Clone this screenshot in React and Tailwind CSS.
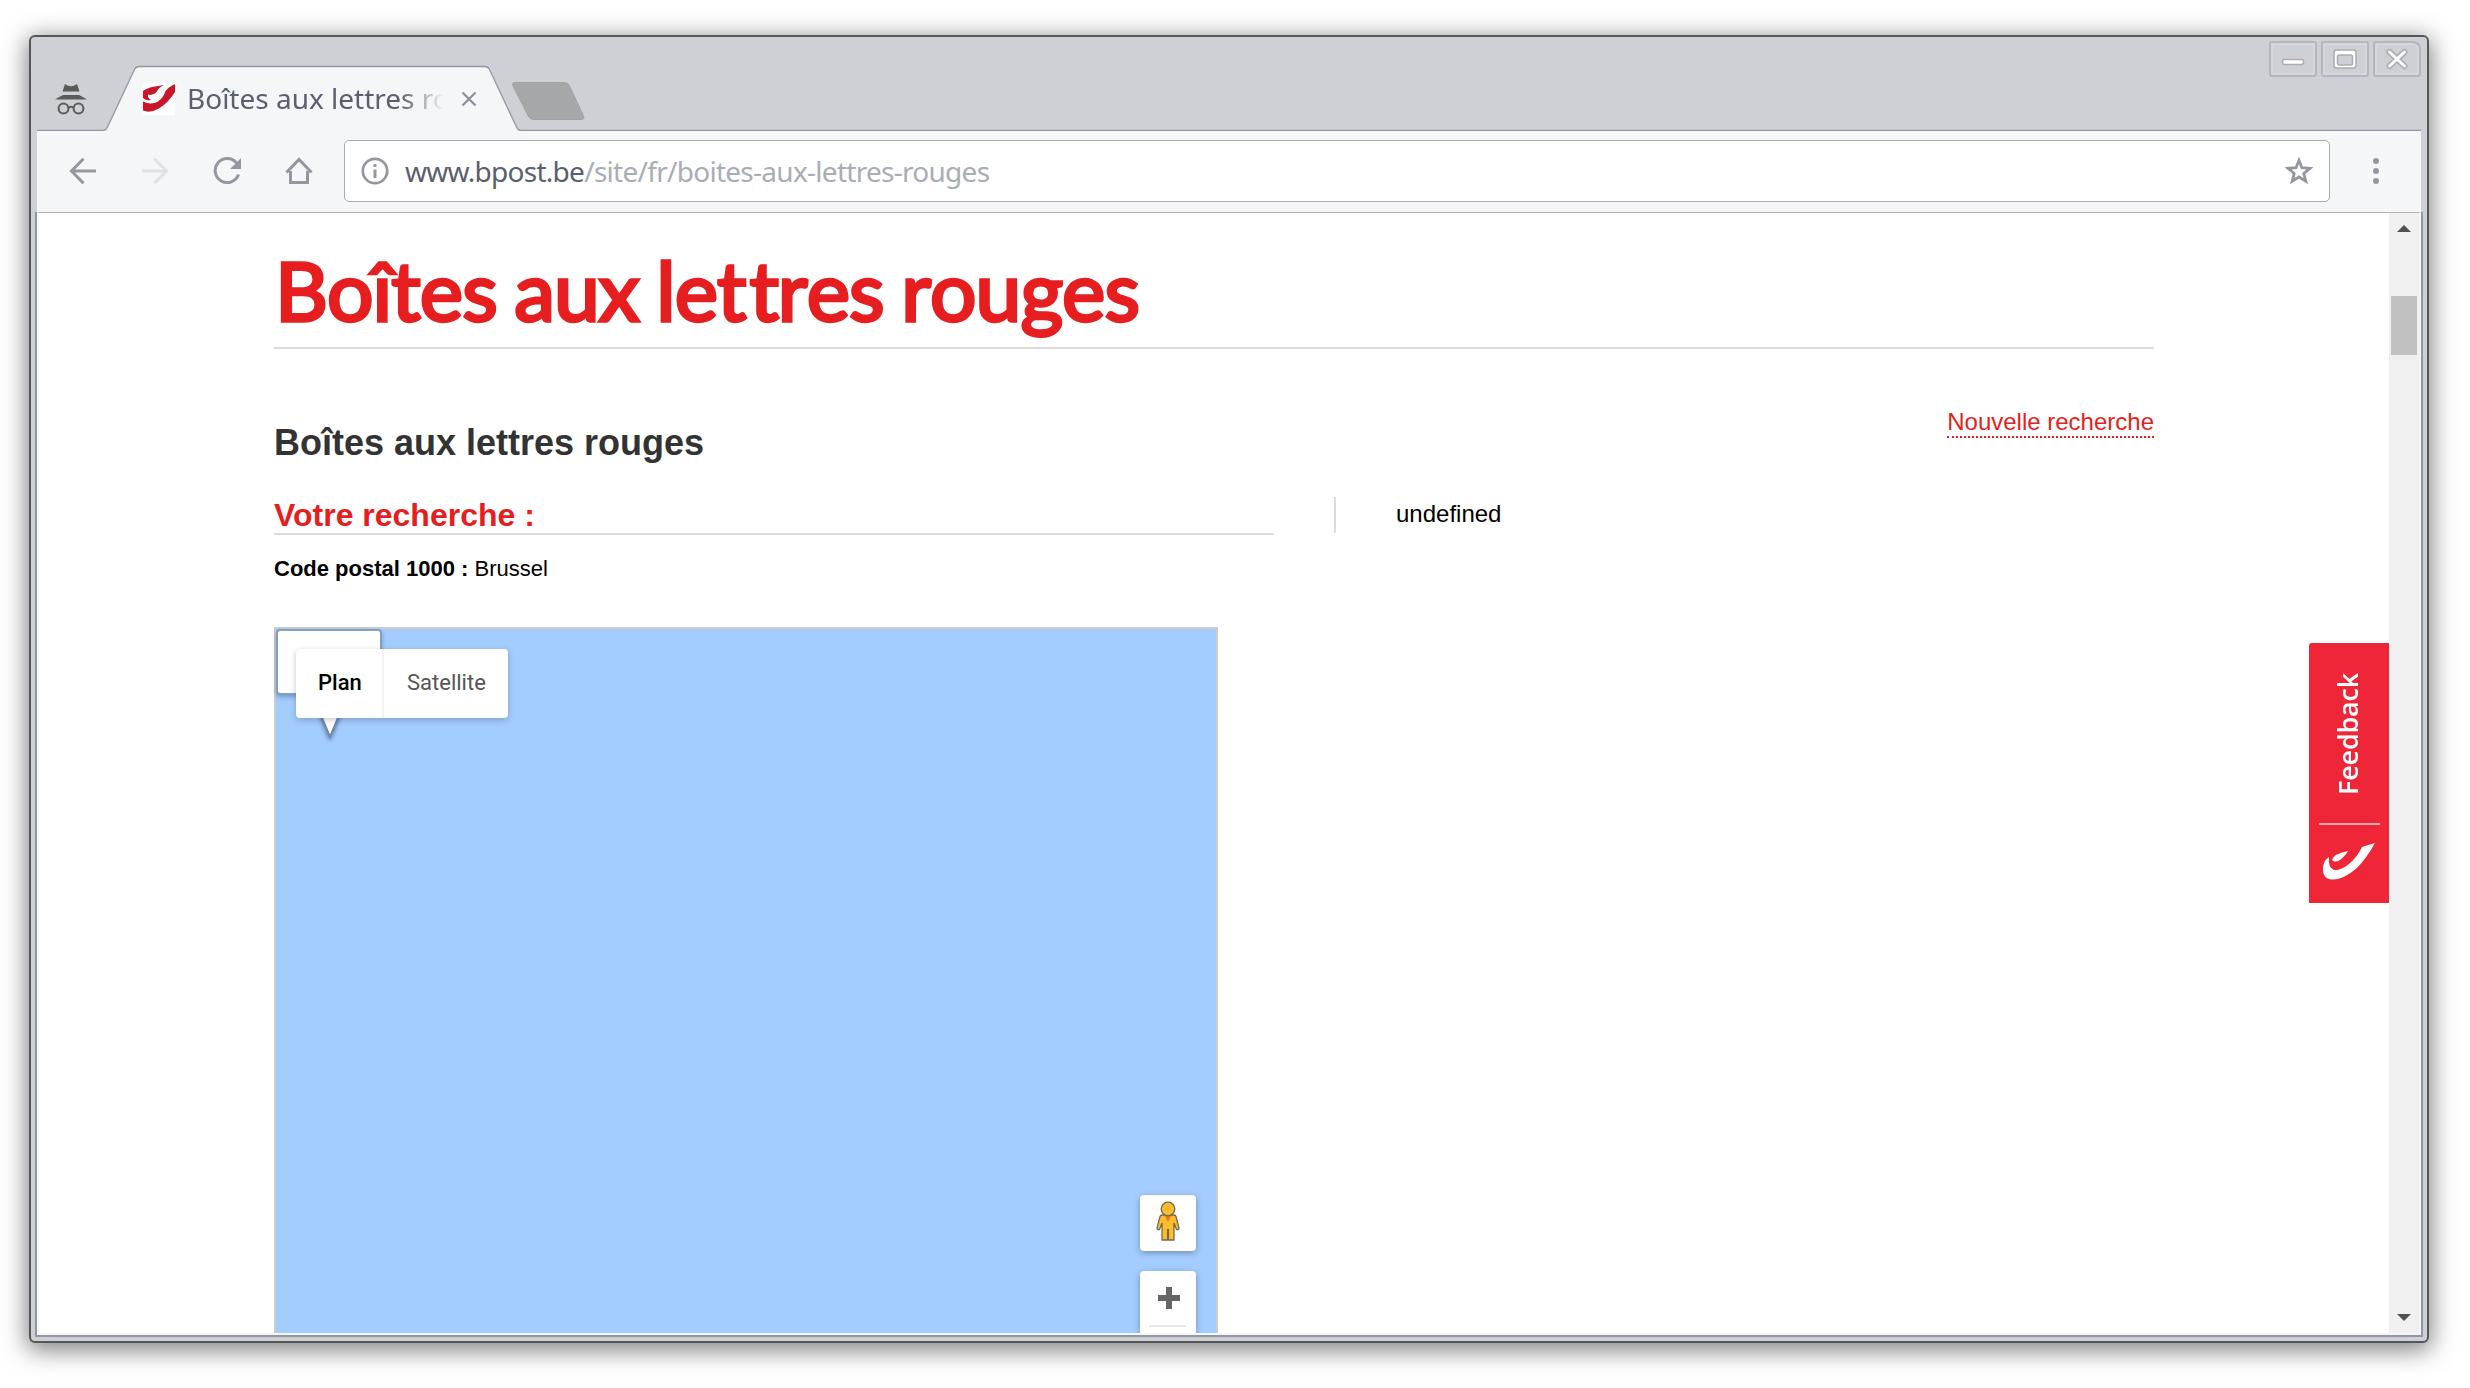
const UI = "font-['Noto_Sans']";

function WinButton({ children, last }) {
  return (
    <div className={"flex h-9 w-12 items-center justify-center border-2 border-[#b4b6bb] shadow-[inset_0_0_0_2px_#d5d7dc] " + (last ? "rounded-[3px] rounded-tr-lg" : "rounded-[3px]")}>
      {children}
    </div>
  );
}

function TabStrip() {
  return (
    <div className="relative flex h-[94px]">
      <svg className="absolute left-0 top-0" width="2396" height="94" viewBox="31 37 2396 94">
        <path d="M37 130.500H103Q106 130.500 107.500 127L134.500 69.500Q136 66.500 139 66.500H485Q488 66.500 489.500 69.500L516.500 127Q518 130.500 521 130.500H2421V132H37Z" fill="#f4f6f8" />
        <path d="M37 130.500H103Q106 130.500 107.500 127L134.500 69.500Q136 66.500 139 66.500H485Q488 66.500 489.500 69.500L516.500 127Q518 130.500 521 130.500H2421" fill="none" stroke="#94979f" strokeWidth="1.300" />
        <path d="M515 82.500H564Q568 82.500 569.500 86L583.500 116Q585 119.500 581 119.500H534Q530 119.500 528.500 116.500L513 86Q511.500 82.500 515 82.500Z" fill="#a6a7a8" stroke="#9fa1a4" />
      </svg>
      <svg className="relative ml-6 mt-[47px] h-8 w-8" viewBox="0 0 32 32" fill="none">
        <path d="M10 0L12.500 1.500Q16 3 19.500 1.500L22 0L24.500 7.500H7.500Z" fill="#5a5a5a" />
        <path d="M0 15.500Q4 13 8 11H24Q28 13 32 15.500Z" fill="#5a5a5a" />
        <circle cx="8.500" cy="24.500" r="4.900" stroke="#5a5a5a" strokeWidth="2" />
        <circle cx="23.500" cy="24.500" r="4.900" stroke="#5a5a5a" strokeWidth="2" />
        <path d="M13 24Q16 21.500 19 24" stroke="#5a5a5a" strokeWidth="2" />
      </svg>
      <svg className="relative ml-14 mt-[46px] h-8 w-8" viewBox="0 0 32 32">
        <path d="M0 0H32V32H0Z" fill="#fff" />
        <path d="M32 1V9Q25 20 16 25.500Q7 30.500 0 27.500V18.500Q8 22.500 15 18.500Q21 14 22 9Q25 4 32 1Z" fill="#c9162a" />
        <path d="M0 8Q4 4 21 2Q16 4 13.500 9Q10 13 5 11.500Q4.500 15 8 17Q3 18 0 15Z" fill="#c9162a" />
      </svg>
      <div className={"relative ml-[12px] mt-[44px] h-10 w-[260px] overflow-hidden whitespace-nowrap text-[28px] leading-[34px] text-[#5a606e] [mask-image:linear-gradient(to_right,black_82%,transparent_99%)] " + UI}>Boîtes aux lettres rouges</div>
      <svg className="relative ml-3.5 mt-[54px] h-4 w-4" viewBox="0 0 16 16" stroke="#8c9099" strokeWidth="2.200">
        <path d="M1.500 1.500L14.500 14.500M14.500 1.500L1.500 14.500" />
      </svg>
      <div className="relative ml-auto mr-1.5 mt-1 flex gap-1">
        <WinButton>
          <svg width="28" height="24" viewBox="0 0 28 24"><rect x="3.500" y="12.500" width="21" height="5" rx="2" fill="#fff" stroke="#aaacb0" strokeWidth="1.500" /></svg>
        </WinButton>
        <WinButton>
          <svg width="28" height="24" viewBox="0 0 28 24"><rect x="3" y="3" width="22" height="18" rx="2.500" fill="#fff" stroke="#aaacb0" strokeWidth="1.500" /><rect x="6.500" y="8" width="15" height="10" rx="2" fill="#cdd0d5" stroke="#aaacb0" strokeWidth="1.500" /></svg>
        </WinButton>
        <WinButton last>
          <svg width="28" height="24" viewBox="0 0 28 24" strokeLinecap="round"><path d="M6.500 5L21.500 19M21.500 5L6.500 19" stroke="#aaacb0" strokeWidth="6" /><path d="M6.500 5L21.500 19M21.500 5L6.500 19" stroke="#fff" strokeWidth="3" /></svg>
        </WinButton>
      </div>
    </div>
  );
}

function Toolbar() {
  return (
    <div className="mx-1.5 flex h-[81px] items-center bg-[#f4f6f8] pb-px">
      <svg className="ml-8 h-7 w-7" viewBox="0 0 28 28" fill="none" stroke="#94979f" strokeWidth="3"><path d="M27 14H3M14.500 1.800L2.500 14L14.500 26.200" /></svg>
      <svg className="ml-11 h-7 w-7" viewBox="0 0 28 28" fill="none" stroke="#e0e1e4" strokeWidth="3"><path d="M1 14H25M13.500 1.800L25.500 14L13.500 26.200" /></svg>
      <svg className="ml-11 h-7 w-7" viewBox="0 0 28 28" fill="none"><path d="M23.500 6A12 12 0 1 0 25.500 17.500" stroke="#94979f" strokeWidth="3" /><path d="M28 1V12H17Z" fill="#94979f" /></svg>
      <svg className="ml-11 h-7 w-7" viewBox="0 0 28 28" fill="none" stroke="#94979f" strokeWidth="3"><path d="M1.500 15.500L14 2.500L26.500 15.500M5.500 14V25.500H22.500V14" /></svg>
      <div className="ml-[31px] flex h-[62px] w-[1986px] items-center rounded-[5px] border-[1.500px] border-[#a9abb0] bg-white">
        <svg className="ml-4 h-7 w-7" viewBox="0 0 28 28" fill="none"><circle cx="14" cy="14" r="12.200" stroke="#94979f" strokeWidth="2.700" /><path d="M12.500 7H15.500V10H12.500ZM12.500 12.500H15.500V21H12.500Z" fill="#94979f" /></svg>
        <div className={"ml-4 whitespace-nowrap text-[28px] leading-[34px] tracking-[-0.72px] text-[#5a606e] " + UI}>www.bpost.be<span className="text-[#a9adb5]">/site/fr/boites-aux-lettres-rouges</span></div>
        <svg className="ml-auto mr-[15px] h-[30px] w-[30px]" viewBox="0 0 30 30" fill="none" stroke="#94979f" strokeWidth="2.800"><path d="M15 4.300L17.900 11.700L26 12.300L19.800 17.400L21.800 25.300L15 21L8.200 25.300L10.200 17.400L4 12.300L12.100 11.700Z" /></svg>
      </div>
      <div className="ml-[43px] flex flex-col gap-1">
        <i className="h-1.5 w-1.5 rounded-full bg-[#94979f]" />
        <i className="h-1.5 w-1.5 rounded-full bg-[#94979f]" />
        <i className="h-1.5 w-1.5 rounded-full bg-[#94979f]" />
      </div>
    </div>
  );
}

function MapPanel() {
  return (
    <div className="relative ml-[235px] mt-[44px] h-[720px] w-[944px] border-2 border-[#ccc] bg-[#a3ccff]">
      <div className="absolute left-0 top-0 h-[66px] w-[106px] rounded-[4px] border-2 border-[#7f9fcb] bg-white shadow-[0_2px_4px_rgba(50,70,110,.4)]" />
      <svg className="absolute left-[36px] top-[84px] drop-shadow-[0_2px_2px_rgba(40,60,100,.6)]" width="36" height="32" viewBox="0 0 36 32"><path d="M8 0L18 24L28 0Z" fill="#fff" stroke="#7189ad" strokeWidth="2" /></svg>
      <div className="absolute left-5 top-5 flex h-[69px] w-[212px] rounded-[4px] bg-white font-[Roboto] text-[22px] leading-[68px] shadow-[0_2px_6px_rgba(0,0,0,.22)]">
        <div className="w-[88px] border-r-2 border-[#f3f3f3] pl-[22px] font-medium text-black">Plan</div>
        <div className="flex-1 pl-[23px] text-[#565656]">Satellite</div>
      </div>
      <div className="absolute right-5 top-[566px] flex flex-col gap-5">
        <div className="flex h-14 w-14 items-center justify-center rounded-[4px] bg-white shadow-[0_2px_6px_rgba(0,0,0,.3)]">
          <svg className="-mt-1" width="24" height="40" viewBox="0 0 24 40" stroke="#726a50" strokeWidth="1.300" fill="#fcbc2c">
            <path d="M6 14H18Q19.500 14 20 15.500L23 27Q23 29 20.500 28.500L18 22V39H6V22L3.500 28.500Q1 29 1 27L4 15.500Q4.500 14 6 14Z" />
            <path d="M12 28V39" strokeWidth="2" />
            <path d="M8.500 14.500H15.500L12 21Z" fill="#e5801f" stroke="none" />
            <circle cx="12" cy="8" r="6.800" />
          </svg>
        </div>
        <div className="flex h-28 w-14 flex-col items-center rounded-[4px] bg-white shadow-[0_2px_6px_rgba(0,0,0,.3)]">
          <svg className="ml-0.5 mt-4" width="22" height="22" viewBox="0 0 22 22"><path d="M8 0H14V8H22V14H14V22H8V14H0V8H8Z" fill="#666" /></svg>
          <div className="mr-0.5 mt-4 h-0.5 w-[37px] bg-[#e6e6e6]" />
        </div>
      </div>
    </div>
  );
}

function Feedback() {
  return (
    <div className="absolute right-0 top-[430px] flex h-[260px] w-20 flex-col items-center rounded-tl-[3px] bg-[#ef2637]">
      <div className="mr-0.5 mt-[30px] h-[122px] rotate-180 whitespace-nowrap font-['Open_Sans'] text-[27px] font-semibold leading-[34px] tracking-[-0.2px] text-white [writing-mode:vertical-rl]">Feedback</div>
      <div className="mt-[28px] h-0.5 w-[61px] bg-[#f9a5ac]" />
      <svg className="mt-[17px]" width="54" height="38" viewBox="0 0 54 38" fill="#fff">
        <path d="M7 15Q2 18 1 25Q0 37 10 37.500Q21 38 35 26Q44 17 53 1Q46 3 40 5Q36 14 27 22Q18 29 12 28Q6 26 7 15Z" />
        <path d="M10 18Q11 12 26 9Q24 13 18 18Q13 21 10 18Z" />
      </svg>
    </div>
  );
}

function Page() {
  return (
    <div className="relative w-[2350px] overflow-hidden bg-white font-['Liberation_Sans'] text-black">
      <div className="ml-[235px] h-[136px] w-[1880px] border-b-2 border-[#dcdcdc] pl-px">
        <h1 className="whitespace-nowrap pt-[21px] font-['Lato'] text-[82px] font-normal leading-[110px] tracking-[-0.95px] text-[#e61e20] [-webkit-text-stroke:3.300px_#e61e20] [font-feature-settings:'liga'_0,'calt'_0,'clig'_0] [font-kerning:none] [word-spacing:-2.500px]">Boîtes aux le<span className="tracking-[3px]">t</span>tres rouges</h1>
      </div>
      <div className="ml-[235px] flex w-[1880px] justify-between">
        <h2 className="mt-[72px] text-[36px] font-bold leading-[44px] text-[#333]">Boîtes aux lettres rouges</h2>
        <a className="mt-[58px] h-[31px] border-b-2 border-dotted border-[#e61e20] text-[24px] leading-[30px] text-[#e61e20]">Nouvelle recherche</a>
      </div>
      <div className="ml-[235px] mt-8 flex h-[38px]">
        <h3 className="w-[1000px] border-b-2 border-[#dcdcdc] text-[32px] font-bold leading-[36px] text-[#e61e20]">Votre recherche :</h3>
        <div className="ml-[60px] h-9 border-l-2 border-[#dcdcdc] pl-[60px] text-[24px] leading-[34px]">undefined</div>
      </div>
      <p className="ml-[235px] mt-5 text-[22px] leading-[28px]"><b>Code postal 1000 :</b> Brussel</p>
      <MapPanel />
      <Feedback />
    </div>
  );
}

function Scrollbar() {
  return (
    <div className="flex w-[30px] flex-col items-center bg-[#f0f0f0]">
      <svg className="mt-3" width="14" height="7" viewBox="0 0 14 7"><path d="M0 7L7 0L14 7Z" fill="#505050" /></svg>
      <div className="mt-16 h-[59px] w-[26px] bg-[#c1c1c1]" />
      <svg className="mb-3 mt-auto" width="14" height="7" viewBox="0 0 14 7"><path d="M0 0H14L7 7Z" fill="#505050" /></svg>
    </div>
  );
}

export default function App() {
  return (
    <div className="h-[1388px] w-[2470px] overflow-hidden bg-white pl-[29px] pt-[35px]">
      <div className="flex h-[1308px] w-[2400px] flex-col rounded-[6px] border-2 border-[#55585a] bg-[#cdd0d5] shadow-[0_5px_24px_2px_rgba(0,0,0,.5)]">
        <TabStrip />
        <Toolbar />
        <div className="mx-1 flex h-[1125px] border-x-2 border-b-2 border-[#94979f]">
          <div className="flex flex-1 border-x-2 border-b-2 border-t border-[#f4f6f8] border-t-[#b2b2b4]">
            <Page />
            <Scrollbar />
          </div>
        </div>
      </div>
    </div>
  );
}
